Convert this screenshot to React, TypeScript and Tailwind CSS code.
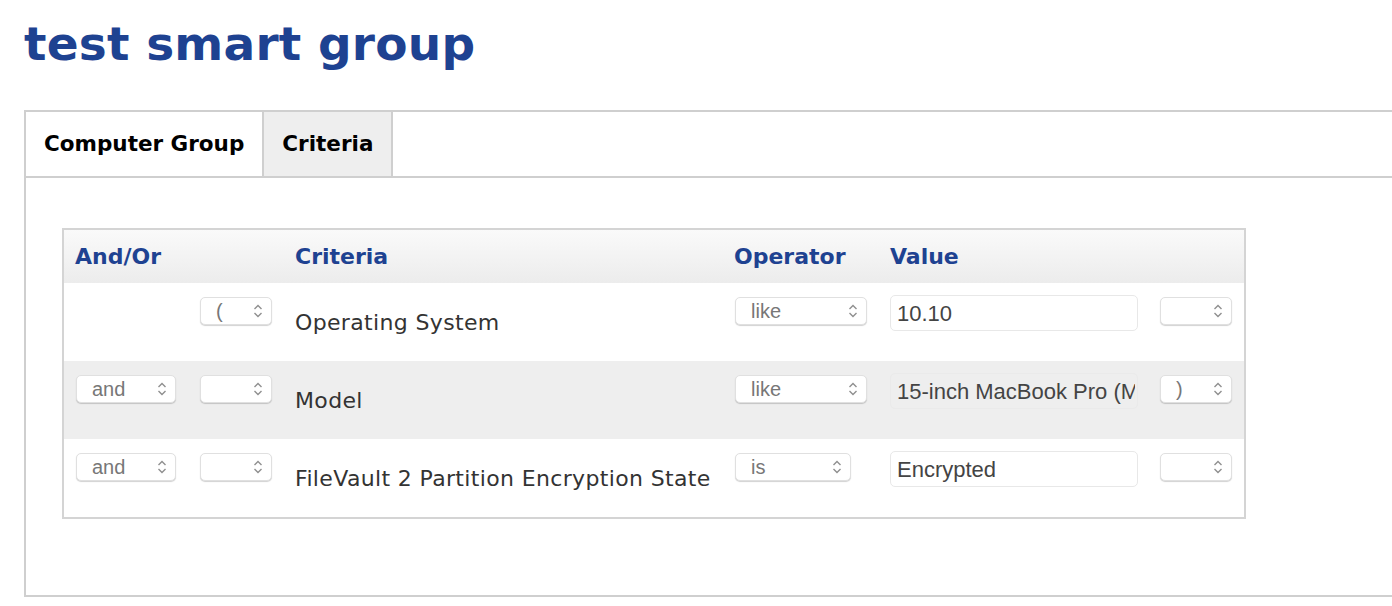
import React from 'react';

const lucida = { fontFamily: '"DejaVu Sans", Verdana, sans-serif' };

function Chevrons() {
  return (
    <svg width="10" height="18" viewBox="0 0 10 18" className="shrink-0">
      <path d="M1.5 7 L5 3.5 L8.5 7" fill="none" stroke="#8f8f8f" strokeWidth="1.4" />
      <path d="M1.5 11 L5 14.5 L8.5 11" fill="none" stroke="#8f8f8f" strokeWidth="1.4" />
    </svg>
  );
}

function Select({ label = '', width }: { label?: string; width: string }) {
  return (
    <div
      className={`${width} h-[28px] flex items-center justify-between pl-[15px] pr-[8px] bg-white border border-[#e0e0e0] rounded-[5px] shadow-[0_1px_1px_rgba(0,0,0,0.18)] text-[20px] text-[#777]`}
      style={{ fontFamily: '"Liberation Sans", Arial, sans-serif' }}
    >
      <span>{label}</span>
      <Chevrons />
    </div>
  );
}

function ValueInput({ value, shaded }: { value: string; shaded?: boolean }) {
  return (
    <div
      className={`w-[248px] h-[36px] flex items-center pl-[6px] pr-[2px] rounded-[5px] border text-[22px] text-[#444] ${
        shaded ? 'border-[#eaeaea] bg-[#eeeeee]' : 'border-[#e8e8e8] bg-white'
      }`}
      style={{ fontFamily: '"Liberation Sans", Arial, sans-serif' }}
    >
      <span className="block w-full overflow-hidden whitespace-nowrap">{value}</span>
    </div>
  );
}

const rows = [
  { andOr: '', open: '(', criteria: 'Operating System', op: 'like', opW: 'w-[132px]', value: '10.10', close: '' },
  { andOr: 'and', open: '', criteria: 'Model', op: 'like', opW: 'w-[132px]', value: '15-inch MacBook Pro (Mid 2015)', close: ')' },
  { andOr: 'and', open: '', criteria: 'FileVault 2 Partition Encryption State', op: 'is', opW: 'w-[116px]', value: 'Encrypted', close: '' },
];

const cols = 'grid grid-cols-[124px_95px_439px_156px_270px_83px] pl-[12px]';

export default function App() {
  return (
    <div className="min-h-[606px] bg-white pt-[14px] pl-[24px] overflow-hidden" style={lucida}>
      <h1 className="text-[47px] leading-[60px] font-bold text-[#1e4291] tracking-[0.2px]">test smart group</h1>

      <div className="mt-[36px]">
        <div className="flex border-t-2 border-l-2 border-b-2 border-[#cfcfcf] h-[68px]">
          <div className="flex items-center px-[18px] border-r-2 border-[#cfcfcf] text-[21.5px] font-bold text-black bg-white">
            Computer Group
          </div>
          <div className="flex items-center px-[18px] border-r-2 border-[#cfcfcf] text-[21.5px] font-bold text-black bg-[#eeeeee]">
            Criteria
          </div>
        </div>

        <div className="h-[419px] border-l-2 border-b-2 border-[#cfcfcf] pt-[50px] pl-[36px]">
          <div className="w-[1184px] border-2 border-[#d4d4d4]">
            <div className={`${cols} h-[53px] items-center bg-gradient-to-b from-[#fafafa] to-[#ececec] text-[22px] font-bold text-[#1e4291]`}>
              <div className="-ml-[1px]">And/Or</div>
              <div />
              <div>Criteria</div>
              <div>Operator</div>
              <div>Value</div>
              <div />
            </div>
            {rows.map((r, i) => (
              <div
                key={i}
                className={`${cols} h-[78px] ${i === 1 ? 'bg-[#eeeeee]' : 'bg-white'}`}
              >
                <div className="pt-[14px]">{r.andOr && <Select label={r.andOr} width="w-[100px]" />}</div>
                <div className="pt-[14px]">
                  <Select label={r.open} width="w-[72px]" />
                </div>
                <div className="flex items-center pt-[1px] text-[22px] tracking-[0.35px] text-[#333] whitespace-nowrap">{r.criteria}</div>
                <div className="pt-[14px] pl-[1px]">
                  <Select label={r.op} width={r.opW} />
                </div>
                <div className="pt-[12px]">
                  <ValueInput value={r.value} shaded={i === 1} />
                </div>
                <div className="pt-[14px]">
                  <Select label={r.close} width="w-[72px]" />
                </div>
              </div>
            ))}
          </div>
        </div>
      </div>
    </div>
  );
}
